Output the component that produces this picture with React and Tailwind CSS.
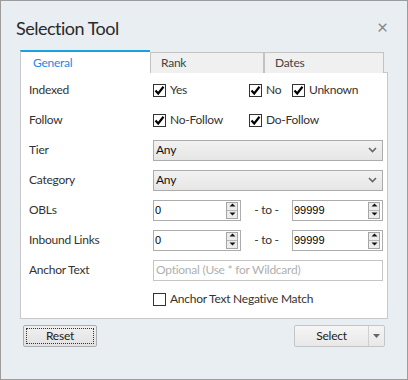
import React from "react";

const font = { fontFamily: 'Lato, "Open Sans", sans-serif' };

function Check({ checked }) {
  return (
    <span className="w-[13px] h-[13px] border border-[#333333] bg-white flex items-center justify-center shrink-0">
      {checked && (
        <svg width="11" height="11" viewBox="0 0 11 11">
          <path d="M1.5 5.5 L4.2 8.5 L9.5 1.8" stroke="#000" strokeWidth="2.2" fill="none" />
        </svg>
      )}
    </span>
  );
}

function Opt({ label, checked = true, w }) {
  return (
    <div className={`flex items-center gap-[4px] ${w}`}>
      <Check checked={checked} />
      <span className="text-[12px] tracking-[-0.25px] text-[#333] leading-none">{label}</span>
    </div>
  );
}

function Row({ label, children, h = "h-[30px]" }) {
  return (
    <div className={`flex items-center ${h}`}>
      <div className="w-[124px] text-[12px] tracking-[-0.25px] text-[#333] leading-none">{label}</div>
      <div className="flex-1 flex items-center">{children}</div>
    </div>
  );
}

function Select({ value }) {
  return (
    <div className="w-[230px] h-[21px] border border-[#acacac] bg-gradient-to-b from-[#f2f2f2] to-[#e6e6e6] flex items-center justify-between pl-[2px] pr-[5px]">
      <span className="text-[12px] tracking-[-0.25px] text-[#111] leading-none">{value}</span>
      <svg width="9" height="6" viewBox="0 0 9 6">
        <path d="M1 1 L4.5 4.5 L8 1" stroke="#666" strokeWidth="1.6" fill="none" />
      </svg>
    </div>
  );
}

function Spin({ value, w }) {
  return (
    <div className={`${w} h-[21px] border border-[#acacac] bg-white flex items-center justify-between pr-[2px]`}>
      <span className="text-[11px] text-black leading-none pl-[1px]" style={{ fontFamily: '"Liberation Sans", Arial, sans-serif' }}>{value}</span>
      <div className="w-[12px] h-[17px] border border-[#a5a5a5] flex flex-col bg-[#ececec]">
        <div className="flex-1 flex items-center justify-center border-b border-[#b5b5b5]">
          <svg width="7" height="6" viewBox="0 0 7 6">
            <path d="M3.5 0.5 L6.5 3.5 L0.5 3.5 Z" fill="#111" />
          </svg>
        </div>
        <div className="flex-1 flex items-center justify-center">
          <svg width="7" height="6" viewBox="0 0 7 6">
            <path d="M0.5 1.5 L6.5 1.5 L3.5 4.5 Z" fill="#111" />
          </svg>
        </div>
      </div>
    </div>
  );
}

export default function App() {
  return (
    <div className="w-[408px] h-[380px] border border-[#9c9c9c] bg-[#e9eef3] flex flex-col" style={font}>
      <div className="flex items-center justify-between pl-[15px] pr-[19px] pt-[14px] h-[49px]">
        <span className="text-[18px] tracking-[-0.5px] text-[#2a2a2a] leading-none -mt-[10px]">Selection Tool</span>
        <span className="text-[19px] text-[#888] leading-none -mt-[12px]">×</span>
      </div>
      <div className="ml-[19px] flex items-end h-[23px]">
        <div className="w-[130px] h-[23px] bg-white border-t-2 border-[#1ba1e2] border-l border-l-[#c8c8c8] flex items-center pl-[12px]">
          <span className="text-[12px] tracking-[-0.25px] text-[#1e8ae0] leading-none">General</span>
        </div>
        <div className="w-[114px] h-[21px] bg-[#f0f0f0] border border-[#c3c3c3] border-b-0 flex items-center pl-[10px]">
          <span className="text-[12px] tracking-[-0.25px] text-[#444] leading-none">Rank</span>
        </div>
        <div className="w-[120px] h-[21px] bg-[#f0f0f0] border border-[#c3c3c3] border-b-0 flex items-center pl-[10px]">
          <span className="text-[12px] tracking-[-0.25px] text-[#444] leading-none">Dates</span>
        </div>
        <div className="w-[4px] h-[1px] bg-[#c8c8c8]" />
      </div>
      <div className="ml-[19px] w-[368px] h-[246px] bg-white border border-t-0 border-[#c8c8c8] flex flex-col pt-[2px] pl-[8px]">
        <Row label="Indexed">
          <Opt label="Yes" w="w-[96px]" />
          <Opt label="No" w="w-[43px]" />
          <Opt label="Unknown" />
        </Row>
        <Row label="Follow">
          <Opt label="No-Follow" w="w-[96px]" />
          <Opt label="Do-Follow" />
        </Row>
        <Row label="Tier">
          <Select value="Any" />
        </Row>
        <Row label="Category">
          <Select value="Any" />
        </Row>
        <Row label="OBLs">
          <Spin value="0" w="w-[88px]" />
          <span className="w-[51px] text-center text-[12px] tracking-[-0.25px] text-[#333] leading-none">- to -</span>
          <Spin value="99999" w="w-[91px]" />
        </Row>
        <Row label="Inbound Links">
          <Spin value="0" w="w-[88px]" />
          <span className="w-[51px] text-center text-[12px] tracking-[-0.25px] text-[#333] leading-none">- to -</span>
          <Spin value="99999" w="w-[91px]" />
        </Row>
        <Row label="Anchor Text">
          <div className="w-[230px] h-[21px] border border-[#c5c5c5] bg-white flex items-center pl-[2px]">
            <span className="text-[12px] tracking-[-0.25px] text-[#b0b0b0] leading-none">Optional (Use * for Wildcard)</span>
          </div>
        </Row>
        <Row label="" h="h-[28px]">
          <Opt label="Anchor Text Negative Match" checked={false} />
        </Row>
      </div>
      <div className="flex justify-between items-center pl-[22px] pr-[22px] mt-[6px]">
        <div className="w-[74px] h-[22px] rounded-[2px] border border-[#adadad] bg-gradient-to-b from-[#f0f0f0] to-[#e2e2e2] p-[2px]">
          <div className="w-full h-full border border-dotted border-[#333] flex items-center justify-center">
            <span className="text-[12px] tracking-[-0.25px] text-[#222] leading-none">Reset</span>
          </div>
        </div>
        <div className="w-[91px] h-[22px] rounded-[2px] border border-[#c5c5c5] bg-gradient-to-b from-[#f5f5f5] to-[#e8e8e8] flex">
          <div className="w-[74px] flex items-center justify-center border-r border-[#cfcfcf]">
            <span className="text-[12px] tracking-[-0.25px] text-[#222] leading-none">Select</span>
          </div>
          <div className="flex-1 flex items-center justify-center">
            <svg width="7" height="4" viewBox="0 0 7 4">
              <path d="M0 0 L7 0 L3.5 4 Z" fill="#666" />
            </svg>
          </div>
        </div>
      </div>
    </div>
  );
}
